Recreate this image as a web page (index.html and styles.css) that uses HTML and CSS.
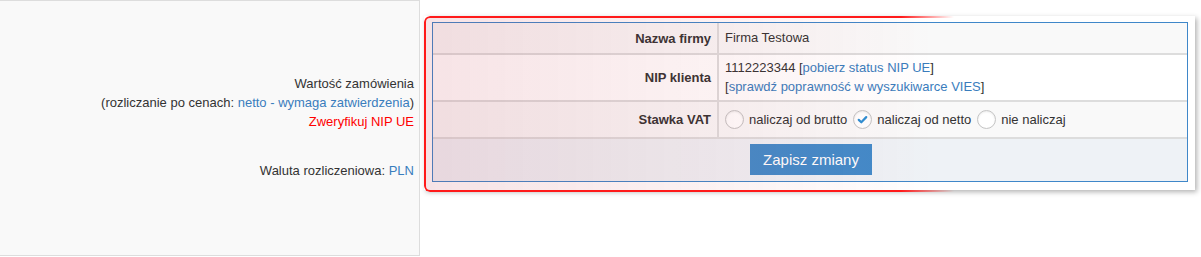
FILE: index.html
```html
<!DOCTYPE html>
<html lang="pl">
<head>
<meta charset="utf-8">
<link rel="stylesheet" href="styles.css">
</head>
<body>
<div class="page">
  <div class="side">
    <div class="summary">
      <div>Wartość zamówienia</div>
      <div>(rozliczanie po cenach: <a class="link">netto - wymaga zatwierdzenia</a>)</div>
      <div class="warn">Zweryfikuj NIP UE</div>
    </div>
    <div class="currency">Waluta rozliczeniowa: <a class="link">PLN</a></div>
  </div>
  <div class="popup">
    <div class="form">
      <div class="row odd">
        <div class="label">Nazwa firmy</div>
        <div class="value">Firma Testowa</div>
      </div>
      <div class="row">
        <div class="label">NIP klienta</div>
        <div class="value">
          <div>1112223344 [<a class="link">pobierz status NIP UE</a>]</div>
          <div>[<a class="link">sprawdź poprawność w wyszukiwarce VIES</a>]</div>
        </div>
      </div>
      <div class="row odd">
        <div class="label">Stawka VAT</div>
        <div class="value radios">
          <span class="radio"></span><span class="opt">naliczaj od brutto</span>
          <span class="radio checked"><svg viewBox="0 0 20 20" width="20" height="20"><path d="M5.6 10.4 L8.6 13.2 L14.4 7.2" fill="none" stroke="#2e8fd3" stroke-width="2.6" stroke-linecap="round" stroke-linejoin="round"/></svg></span><span class="opt">naliczaj od netto</span>
          <span class="radio"></span><span class="opt">nie naliczaj</span>
        </div>
      </div>
      <div class="actions">
        <button class="btn">Zapisz zmiany</button>
      </div>
    </div>
    <div class="highlight"><span class="notch"></span></div>
  </div>
</div>
</body>
</html>
```
FILE: styles.css
```css
html, body {
  margin: 0;
  padding: 0;
  background: #fff;
}
body {
  font-family: "Liberation Sans", Arial, sans-serif;
  font-size: 13px;
  color: #333;
  line-height: 19px;
}
.page {
  display: flex;
  align-items: flex-start;
  width: 1201px;
  height: 257px;
  overflow: hidden;
}
.link {
  color: #3a7dbd;
  text-decoration: none;
}
.side {
  box-sizing: border-box;
  width: 420px;
  height: 256px;
  flex: none;
  background: #f9f9f9;
  border-top: 1px solid #dddddd;
  border-bottom: 1px solid #dddddd;
  border-right: 1px solid #dddddd;
  padding: 73px 5px 0 0;
  text-align: right;
}
.warn {
  color: #ff0000;
}
.currency {
  margin-top: 30px;
}
.popup {
  position: relative;
  margin-left: 4px;
  margin-top: 16px;
  box-sizing: border-box;
  width: 771px;
  flex: none;
  background: #fff;
  padding: 6px 7px 8px 8px;
  box-shadow: 2px 2px 5px rgba(0, 0, 0, 0.3);
}
.form {
  border: 1px solid #3f87c9;
}
.row {
  display: grid;
  grid-template-columns: 286px 1fr;
  border-bottom: 2px solid #dddddd;
  background: #fff;
}
.row.odd {
  background: #f9f9f9;
}
.label {
  font-weight: bold;
  text-align: right;
  padding: 0 6px;
  border-right: 2px solid #dddddd;
  display: flex;
  align-items: center;
  justify-content: flex-end;
}
.value {
  padding: 5px 6px;
  min-height: 19px;
}
.row:first-child .value {
  padding: 5px 6px 6px;
}
.row:nth-child(2) .value {
  padding: 3px 6px 4px;
}
.radios {
  display: flex;
  align-items: center;
  padding: 8px 5px 8px 6px !important;
}
.radio {
  box-sizing: border-box;
  width: 19px;
  height: 19px;
  border-radius: 50%;
  border: 1px solid #c4c4c4;
  background: #fff;
  box-shadow: inset 0 1px 2px rgba(0, 0, 0, 0.08);
  display: inline-flex;
  align-items: center;
  justify-content: center;
  flex: none;
}
.radio svg {
  width: 17px;
  height: 17px;
}
.opt {
  margin: 0 6px 0 5px;
}
.actions {
  background: #eef2f6;
  display: flex;
  justify-content: center;
  padding: 5px 0 6px;
}
.btn {
  font-family: "Liberation Sans", Arial, sans-serif;
  font-size: 15px;
  color: #fff;
  background: #428bca;
  border: none;
  border-radius: 0;
  width: 122px;
  height: 31px;
  padding: 0;
  margin-left: 2px;
}
.highlight {
  position: absolute;
  left: 0;
  top: 0;
  width: 530px;
  height: 176px;
  box-sizing: border-box;
  border: 2px solid #ff1a1a;
  border-right: none;
  border-radius: 6px 0 0 6px;
  background: linear-gradient(to right, rgba(190, 40, 60, 0.13), rgba(210, 60, 70, 0.06) 60%, rgba(255, 0, 0, 0) 98%);
  -webkit-mask-image: linear-gradient(to right, #000 0, #000 90%, transparent 100%);
  mask-image: linear-gradient(to right, #000 0, #000 90%, transparent 100%);
  pointer-events: none;
}
.notch {
  position: absolute;
  left: -5px;
  top: 84px;
  width: 0;
  height: 0;
  border-top: 3px solid transparent;
  border-bottom: 3px solid transparent;
  border-right: 4px solid #ff1a1a;
}
```
